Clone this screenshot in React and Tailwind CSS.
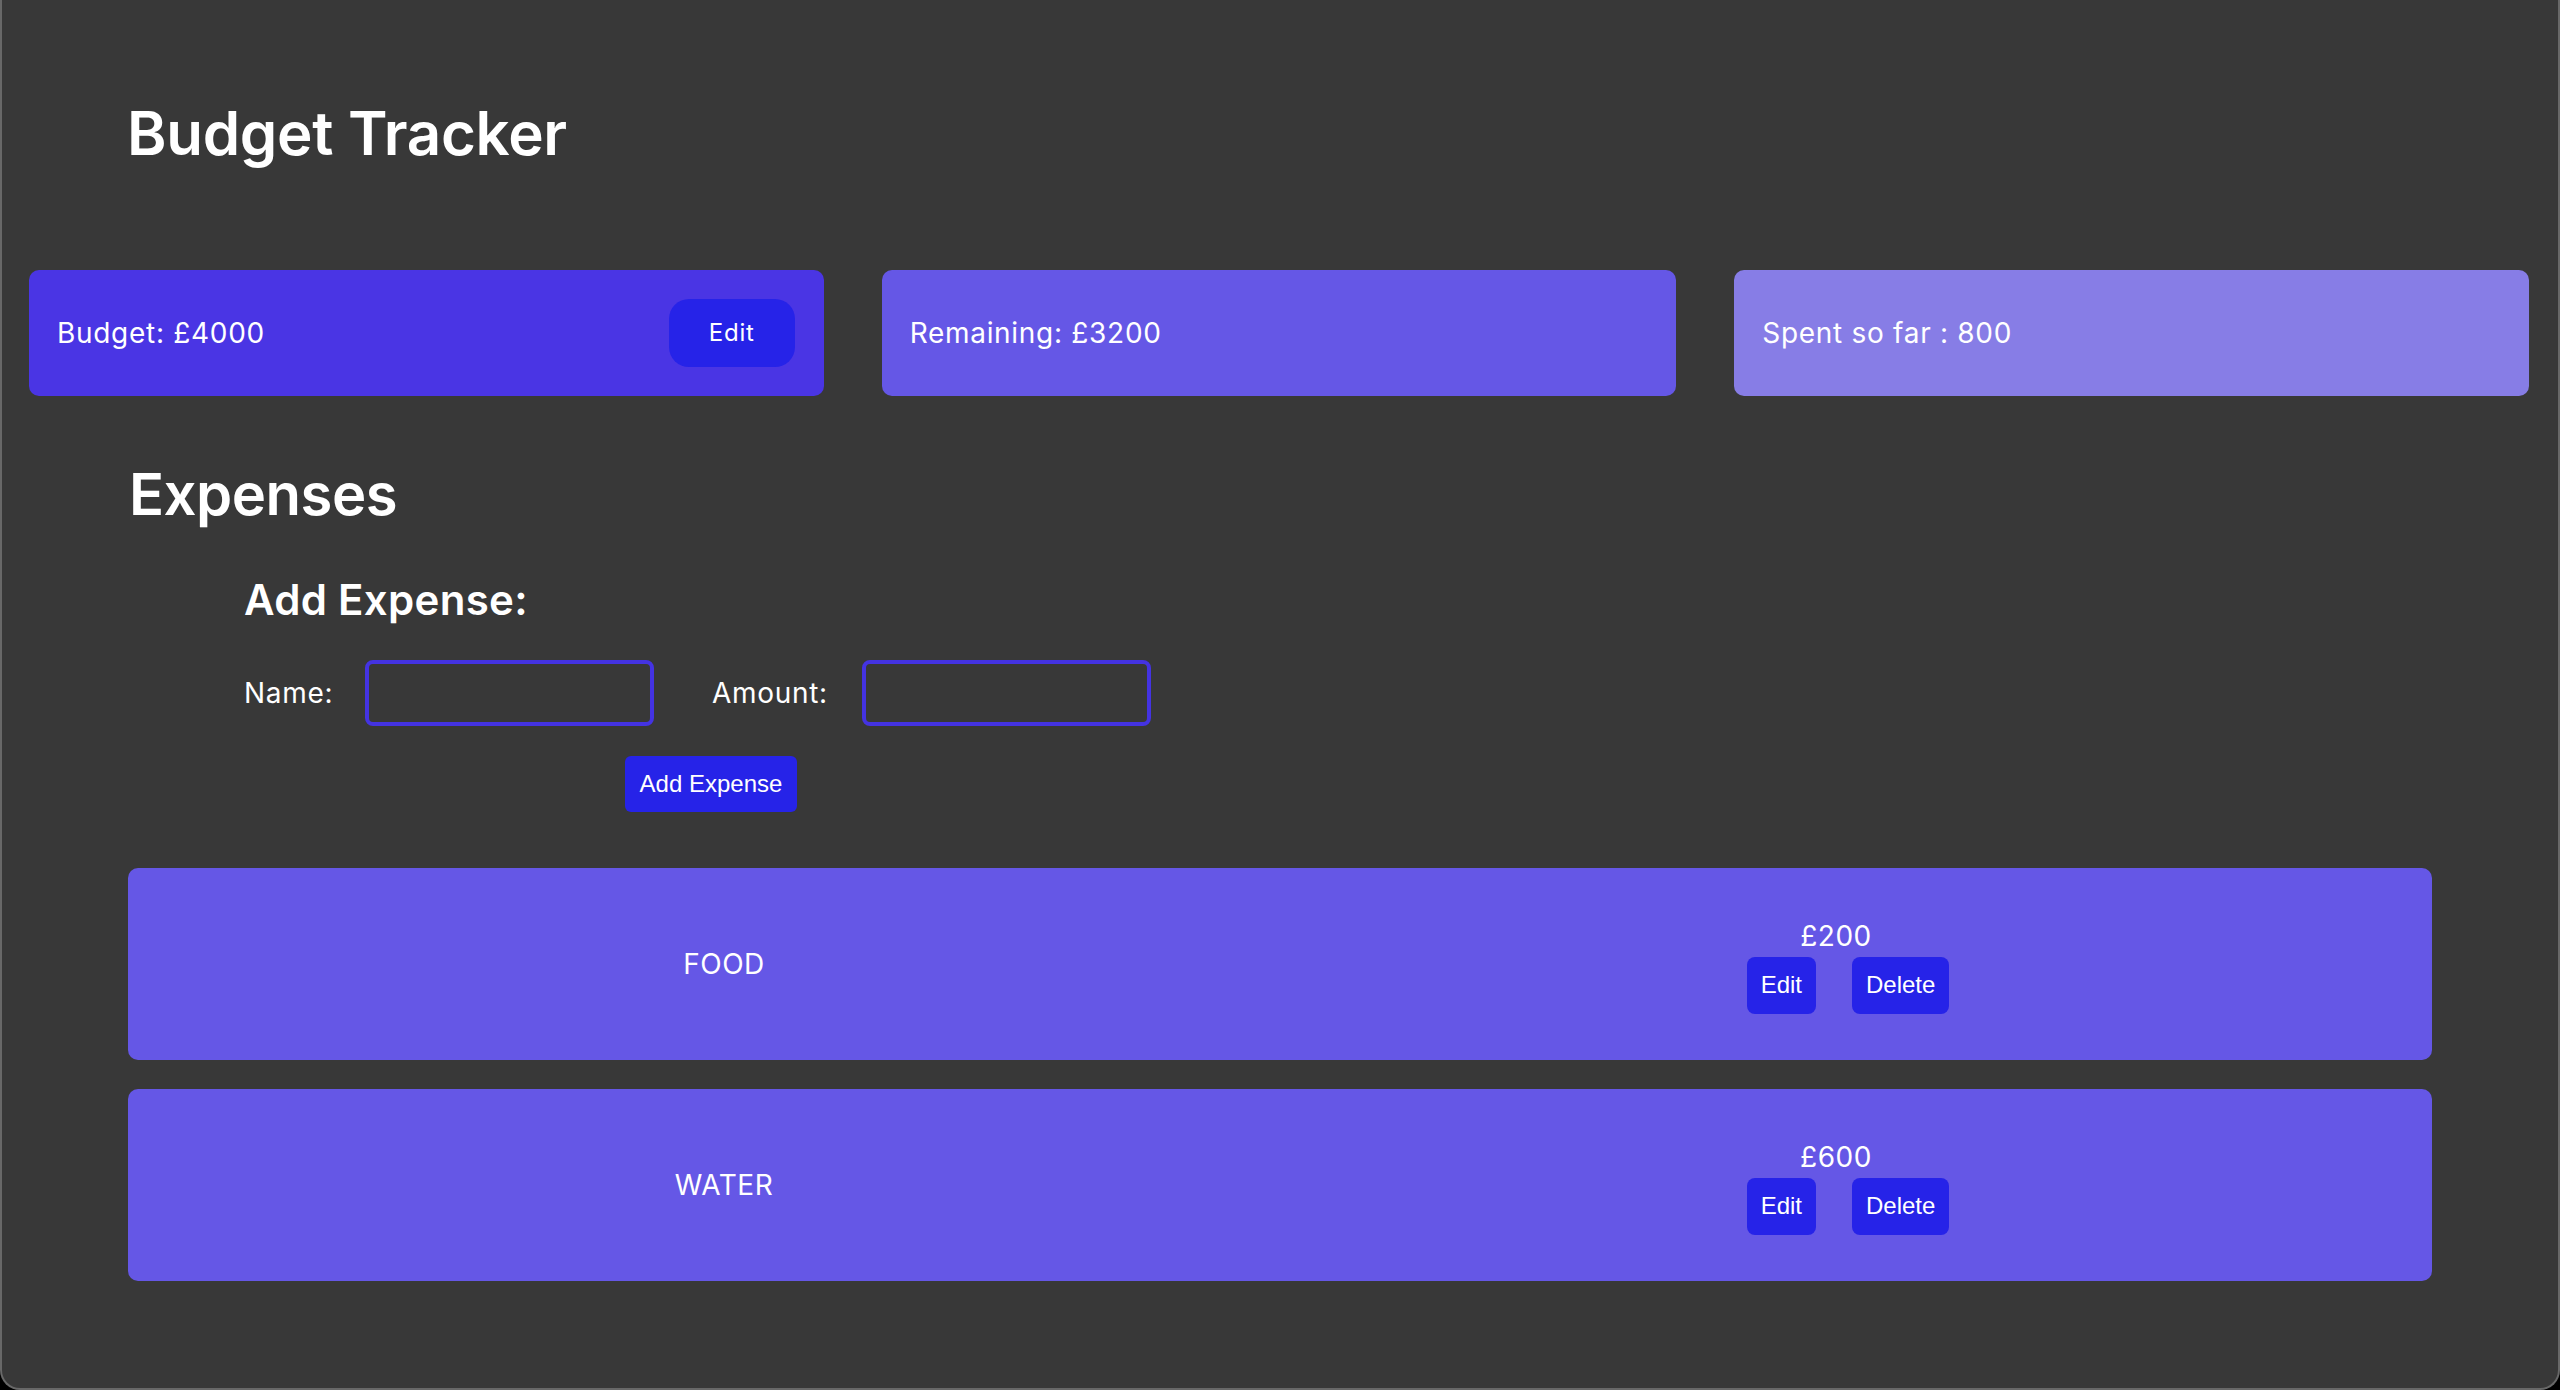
import { useState } from "react";

const expensesData = [
  { id: 1, name: "FOOD", amount: 200 },
  { id: 2, name: "WATER", amount: 600 },
];

export default function App() {
  const [expenses] = useState(expensesData);
  const [form, setForm] = useState({ name: "", amount: "" });
  const budget = 4000;
  const spent = expenses.reduce((acc, e) => acc + e.amount, 0);

  const handleChange = e => setForm({ ...form, [e.target.name]: e.target.value });

  return (
    <div className="w-full h-[1390px] bg-black font-['Inter',sans-serif] text-white">
      <div className="h-full bg-[#383838] border-2 border-t-0 border-[#686868] rounded-b-[20px] overflow-hidden">
        <h1 className="pt-[103px] pl-[125px] text-[60px] leading-none font-semibold tracking-[-0.3px]">
          Budget Tracker
        </h1>

        <div className="mt-[107px] pl-[27px] pr-[29px] grid grid-cols-3 gap-[58px] tracking-[0.7px]">
          <div className="h-[126px] rounded-[10px] bg-[#4a35e4] flex items-center justify-between pl-[28px] pr-[29px]">
            <span className="text-[28px]">Budget: £{budget}</span>
            <button className="w-[126px] h-[68px] rounded-[20px] bg-[#2623e8] text-[24px]">Edit</button>
          </div>
          <div className="h-[126px] rounded-[10px] bg-[#6557e6] flex items-center pl-[28px]">
            <span className="text-[28px]">Remaining: £{budget - spent}</span>
          </div>
          <div className="h-[126px] rounded-[10px] bg-[#877de6] flex items-center pl-[28px]">
            <span className="text-[28px]">Spent so far : {spent}</span>
          </div>
        </div>

        <div className="px-[126px]">
          <h2 className="mt-[69px] pl-[1px] text-[58px] leading-none font-semibold tracking-[-0.5px]">Expenses</h2>

          <div className="ml-[116px] mt-[56px]">
            <h3 className="text-[42px] leading-none font-semibold tracking-[0.3px]">Add Expense:</h3>
            <div className="mt-[39px] flex items-center text-[28px] tracking-[0.7px]">
              <label className="w-[93px]">Name:</label>
              <input
                name="name"
                value={form.name}
                onChange={handleChange}
                className="ml-[28px] w-[289px] h-[66px] rounded-[8px] border-4 border-[#4433e2] bg-transparent outline-none"
              />
              <label className="ml-[58px] w-[121px]">Amount:</label>
              <input
                name="amount"
                value={form.amount}
                onChange={handleChange}
                className="ml-[29px] w-[289px] h-[66px] rounded-[8px] border-4 border-[#4433e2] bg-transparent outline-none"
              />
            </div>
            <button className="mt-[30px] ml-[381px] w-[172px] h-[56px] rounded-[6px] bg-[#2623e8] text-[24px] font-['Liberation_Sans',Arial,sans-serif]">
              Add Expense
            </button>
          </div>

          <div className="mt-[56px] flex flex-col gap-[29px]">
            {expenses.map(exp => (
              <div key={exp.id} className="h-[192px] rounded-[10px] bg-[#6557e6] grid grid-cols-2 px-[40px] items-center tracking-[0.5px]">
                <div className="text-center text-[28px]">{exp.name}</div>
                <div className="flex flex-col items-center">
                  <div className="text-[28px] leading-[42px]">£{exp.amount}</div>
                  <div className="pl-[24px] flex gap-[36px] font-['Liberation_Sans',Arial,sans-serif] text-[24px] tracking-normal">
                    <button className="h-[57px] px-[14px] rounded-[8px] bg-[#2623e8]">Edit</button>
                    <button className="h-[57px] px-[14px] rounded-[8px] bg-[#2623e8]">Delete</button>
                  </div>
                </div>
              </div>
            ))}
          </div>
        </div>
      </div>
    </div>
  );
}
